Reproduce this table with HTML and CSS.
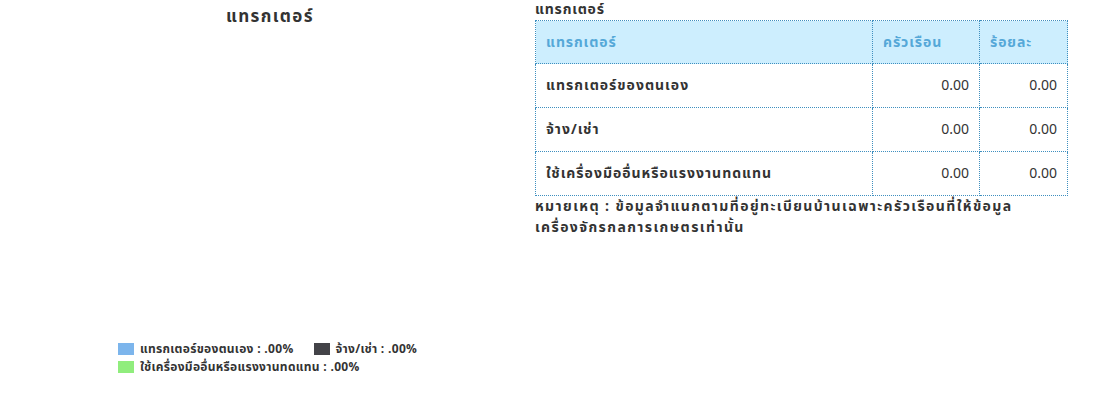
FILE: index.html
```html
<!DOCTYPE html>
<html lang="th">
<head>
<meta charset="utf-8">
<link rel="stylesheet" href="styles.css">
</head>
<body>
<div class="page">
  <section class="chart">
    <h2 class="chart-title">แทรกเตอร์</h2>
    <div class="chart-area"></div>
    <div class="legend">
      <div class="legend-row">
        <span class="legend-item"><span class="sw sw-blue"></span>แทรกเตอร์ของตนเอง : .00%</span>
        <span class="legend-item"><span class="sw sw-dark"></span>จ้าง/เช่า : .00%</span>
      </div>
      <div class="legend-row">
        <span class="legend-item"><span class="sw sw-green"></span>ใช้เครื่องมืออื่นหรือแรงงานทดแทน : .00%</span>
      </div>
    </div>
  </section>
  <section class="data">
    <div class="caption">แทรกเตอร์</div>
    <table class="tbl">
      <thead>
        <tr><th class="c-name">แทรกเตอร์</th><th class="c-hh">ครัวเรือน</th><th class="c-pct">ร้อยละ</th></tr>
      </thead>
      <tbody>
        <tr><td class="name">แทรกเตอร์ของตนเอง</td><td class="num">0.00</td><td class="num">0.00</td></tr>
        <tr><td class="name">จ้าง/เช่า</td><td class="num">0.00</td><td class="num">0.00</td></tr>
        <tr><td class="name">ใช้เครื่องมืออื่นหรือแรงงานทดแทน</td><td class="num">0.00</td><td class="num">0.00</td></tr>
      </tbody>
    </table>
    <p class="note">หมายเหตุ : ข้อมูลจำแนกตามที่อยู่ทะเบียนบ้านเฉพาะครัวเรือนที่ให้ข้อมูล<br>เครื่องจักรกลการเกษตรเท่านั้น</p>
  </section>
</div>
</body>
</html>
```
FILE: styles.css
```css
html, body {
  margin: 0;
  padding: 0;
  background: #fff;
}
body {
  font-family: Tahoma, "Noto Sans Thai", "Noto Sans", "DejaVu Sans", sans-serif;
  color: #333;
}
.page {
  display: flex;
  width: 1093px;
}
.chart {
  width: 535px;
  height: 398px;
  display: flex;
  flex-direction: column;
}
.chart-title {
  margin: 7px 0 0 0;
  padding-left: 5px;
  text-align: center;
  font-size: 17px;
  font-weight: bold;
  line-height: 20px;
  letter-spacing: 1.4px;
  color: #333;
}
.chart-area {
  flex: 1;
}
.legend {
  padding: 0 0 22px 118px;
  font-size: 12px;
  font-weight: bold;
  line-height: 18px;
  letter-spacing: 0.3px;
}
.legend-row {
  display: flex;
  gap: 20px;
}
.legend-item {
  display: flex;
  align-items: center;
}
.sw {
  width: 16px;
  height: 12px;
  margin-right: 6px;
  display: inline-block;
}
.sw-blue { background: #7cb5ec; }
.sw-dark { background: #434348; }
.sw-green { background: #90ed7d; }
.data {
  width: 533px;
  font-size: 14px;
}
.caption {
  font-weight: bold;
  line-height: 18px;
  margin-top: 1px;
  letter-spacing: 0.8px;
}
.tbl {
  border-collapse: collapse;
  width: 533px;
  margin-top: 1px;
}
.tbl th, .tbl td {
  border: 1px dotted #3f8fbf;
  padding: 0 10px;
  font-size: 14px;
}
.tbl th { height: 42px; }
.tbl td { height: 43px; }
.tbl th {
  background: #cdeefe;
  color: #55a8d8;
  font-weight: bold;
  text-align: left;
  letter-spacing: 0.9px;
}
.c-name { width: 316px; }
.c-hh { width: 86px; }
.name {
  font-weight: bold;
  letter-spacing: 1px;
}
.num { text-align: right; }
.note {
  margin: 0;
  font-weight: bold;
  line-height: 21px;
  letter-spacing: 1.4px;
}
```
